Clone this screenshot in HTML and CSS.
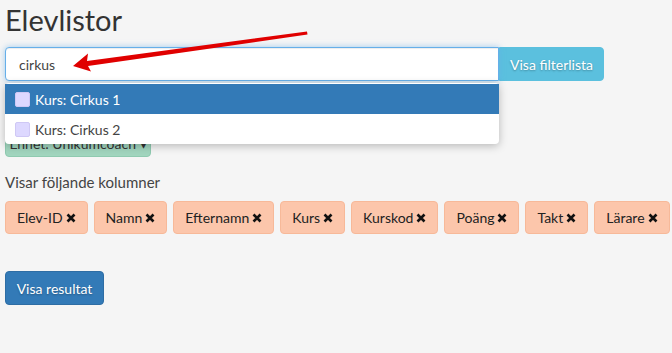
FILE: index.html
```html
<!DOCTYPE html>
<html lang="sv">
<head>
    <meta charset="UTF-8">
    <title>Elevlistor</title>
    <link rel="stylesheet" href="styles.css">
</head>
<body>
    <div class="container">
        <h1>Elevlistor</h1>

        <!-- Filter search -->
        <div class="search-row">
            <div class="search-box">
                <input type="text" class="search-input" value="cirkus">
                <ul class="suggestions">
                    <li class="active"><span class="check"></span>Kurs: Cirkus 1</li>
                    <li><span class="check"></span>Kurs: Cirkus 2</li>
                </ul>
            </div>
            <button class="btn btn-info">Visa filterlista</button>
        </div>

        <button class="btn btn-unit">Enhet: Unikumcoach ▾</button>

        <!-- Columns -->
        <p class="columns-label">Visar följande kolumner</p>
        <div class="tags">
            <span class="tag">Elev-ID <svg class="x" viewBox="0 0 10 10"><path d="M1.5 1.5l7 7M8.5 1.5l-7 7"/></svg></span>
            <span class="tag">Namn <svg class="x" viewBox="0 0 10 10"><path d="M1.5 1.5l7 7M8.5 1.5l-7 7"/></svg></span>
            <span class="tag">Efternamn <svg class="x" viewBox="0 0 10 10"><path d="M1.5 1.5l7 7M8.5 1.5l-7 7"/></svg></span>
            <span class="tag">Kurs <svg class="x" viewBox="0 0 10 10"><path d="M1.5 1.5l7 7M8.5 1.5l-7 7"/></svg></span>
            <span class="tag">Kurskod <svg class="x" viewBox="0 0 10 10"><path d="M1.5 1.5l7 7M8.5 1.5l-7 7"/></svg></span>
            <span class="tag">Poäng <svg class="x" viewBox="0 0 10 10"><path d="M1.5 1.5l7 7M8.5 1.5l-7 7"/></svg></span>
            <span class="tag">Takt <svg class="x" viewBox="0 0 10 10"><path d="M1.5 1.5l7 7M8.5 1.5l-7 7"/></svg></span>
            <span class="tag">Lärare <svg class="x" viewBox="0 0 10 10"><path d="M1.5 1.5l7 7M8.5 1.5l-7 7"/></svg></span>
            <span class="tag">Klass <svg class="x" viewBox="0 0 10 10"><path d="M1.5 1.5l7 7M8.5 1.5l-7 7"/></svg></span>
        </div>

        <button class="btn btn-primary">Visa resultat</button>

        <svg class="arrow" width="320" height="80" viewBox="0 0 320 80">
            <polygon points="307,31.5 307.5,34.5 88,66 91,71.5 73,66 88,53.5 87,61" fill="#e00000"/>
        </svg>
    </div>
</body>
</html>
```

FILE: styles.css
```css
body {
    margin: 0;
    background: #f5f5f5;
    font-family: Lato, "Liberation Sans", sans-serif;
    color: #333;
    overflow: hidden;
}

.container {
    position: relative;
    padding: 0 5px;
}

h1 {
    font-size: 29px;
    font-weight: 400;
    margin: 0;
    padding-top: 2px;
    height: 45px;
}

/* Search */
.search-row {
    display: flex;
    height: 34px;
}

.search-box {
    position: relative;
    width: 494px;
}

.search-input {
    box-sizing: border-box;
    width: 100%;
    height: 34px;
    padding: 0 13px;
    font-family: inherit;
    font-size: 14px;
    color: #444;
    border: 1px solid #66afe9;
    border-radius: 4px 0 0 4px;
    box-shadow: inset 0 1px 1px rgba(0, 0, 0, .075), 0 0 6px rgba(102, 175, 233, .6);
    outline: none;
}

.suggestions {
    position: absolute;
    top: 36px;
    left: 0;
    right: 0;
    margin: 0;
    padding: 1px 0 0;
    list-style: none;
    background: #fff;
    border-radius: 4px;
    box-shadow: 0 2px 8px rgba(0, 0, 0, .25);
    z-index: 2;
}

.suggestions li {
    display: flex;
    align-items: center;
    height: 30px;
    padding-left: 10px;
    font-size: 14px;
    color: #444;
}

.suggestions li.active {
    background: #337ab7;
    color: #fff;
}

.check {
    box-sizing: border-box;
    width: 15px;
    height: 15px;
    margin-right: 5px;
    background: #ddd8ff;
    border: 1px solid #cfc8f5;
    border-radius: 2px;
}

/* Buttons */
.btn {
    box-sizing: border-box;
    height: 34px;
    padding: 0 12px;
    font-family: inherit;
    font-size: 14px;
    color: #fff;
    border: 1px solid transparent;
    border-radius: 4px;
    text-shadow: 0 1px 2px rgba(0, 0, 0, .3);
    white-space: nowrap;
    cursor: pointer;
}

.btn-info {
    background: #5bc0de;
    border-color: #5bc0de;
    border-radius: 0 4px 4px 0;
    width: 105px;
    padding: 0;
}

.btn-unit {
    display: block;
    margin-top: 42px;
    width: 146px;
    padding: 6px 0 0;
    background: #a1d5be;
    border-color: #8fcab0;
    color: #333;
    text-shadow: none;
}

.btn-primary {
    display: block;
    width: 99px;
    padding: 0;
    background: #337ab7;
    border-color: #2e6da4;
}

/* Columns */
.columns-label {
    margin: 16px 0 10px;
    font-size: 15px;
    color: #444;
}

.tags {
    display: flex;
    gap: 6px;
    white-space: nowrap;
    margin-bottom: 37px;
}

.tag {
    box-sizing: border-box;
    height: 33px;
    display: flex;
    align-items: center;
    padding: 0 11px;
    font-size: 14px;
    color: #222;
    background: #fcc6ab;
    border: 1px solid #f7b999;
    border-radius: 4px;
}

.x {
    width: 10px;
    height: 10px;
    margin-left: 3px;
    stroke: #111;
    stroke-width: 2.6;
    fill: none;
}

.arrow {
    position: absolute;
    top: 0;
    left: 0;
    z-index: 3;
}
```
